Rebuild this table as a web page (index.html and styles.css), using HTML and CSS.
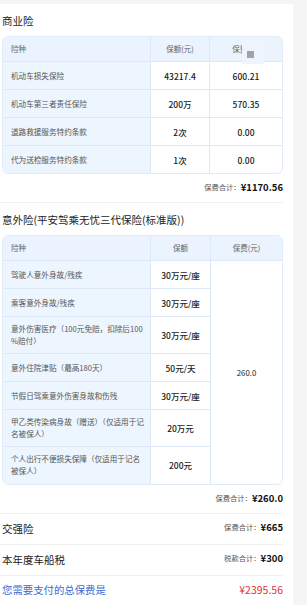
FILE: index.html
```html
<!DOCTYPE html>
<html lang="zh">
<head>
<meta charset="utf-8">
<link rel="stylesheet" href="styles.css">
</head>
<body>
<div class="page">
  <section class="block">
    <h2 class="sec-title">商业险</h2>
    <div class="tbl tbl1">
      <div class="th th-left">险种</div>
      <div class="th">保额(元)</div>
      <div class="th th-last">保费(元)</div>

      <div class="td td-name">机动车损失保险</div>
      <div class="td td-val">43217.4</div>
      <div class="td td-val td-last">600.21</div>

      <div class="td td-name">机动车第三者责任保险</div>
      <div class="td td-val">200万</div>
      <div class="td td-val td-last">570.35</div>

      <div class="td td-name">道路救援服务特约条款</div>
      <div class="td td-val">2次</div>
      <div class="td td-val td-last">0.00</div>

      <div class="td td-name row-end">代为送检服务特约条款</div>
      <div class="td td-val row-end">1次</div>
      <div class="td td-val td-last row-end">0.00</div>

      <div class="img-ph"><span class="img-ph-box"></span></div>
    </div>
    <div class="total"><span class="total-label">保费合计：</span><span class="total-val">¥1170.56</span></div>
  </section>

  <section class="block">
    <h2 class="sec-title">意外险(平安驾乘无忧三代保险(标准版))</h2>
    <div class="tbl tbl2">
      <div class="th th-left">险种</div>
      <div class="th">保额</div>
      <div class="th th-last">保费(元)</div>

      <div class="td td-name">驾驶人意外身故/残疾</div>
      <div class="td td-val">30万元/座</div>
      <div class="td td-span">260.0</div>

      <div class="td td-name">乘客意外身故/残疾</div>
      <div class="td td-val">30万元/座</div>

      <div class="td td-name">意外伤害医疗（100元免赔，扣除后100%赔付）</div>
      <div class="td td-val">30万元/座</div>

      <div class="td td-name">意外住院津贴（最高180天）</div>
      <div class="td td-val">50元/天</div>

      <div class="td td-name">节假日驾乘意外伤害身故和伤残</div>
      <div class="td td-val">30万元/座</div>

      <div class="td td-name">甲乙类传染病身故（赠送）（仅适用于记名被保人）</div>
      <div class="td td-val">20万元</div>

      <div class="td td-name row-end">个人出行不便损失保障（仅适用于记名被保人）</div>
      <div class="td td-val row-end">200元</div>
    </div>
    <div class="total"><span class="total-label">保费合计：</span><span class="total-val">¥260.0</span></div>
  </section>

  <div class="line-row">
    <span class="line-title">交强险</span>
    <span class="line-right"><span class="total-label">保费合计：</span><span class="total-val">¥665</span></span>
  </div>
  <div class="line-row">
    <span class="line-title">本年度车船税</span>
    <span class="line-right"><span class="total-label">税款合计：</span><span class="total-val">¥300</span></span>
  </div>
  <div class="line-row line-final">
    <span class="final-label">您需要支付的总保费是</span>
    <span class="final-val">¥2395.56</span>
  </div>
</div>
</body>
</html>
```

FILE: styles.css
```css
* { box-sizing: border-box; }

html, body {
  margin: 0;
  padding: 0;
  background: #f5f5f5;
  font-family: "Noto Sans CJK SC", "Noto Sans", sans-serif;
  color: #222;
}

.page {
  width: 293px;
  height: 601px;
  margin-top: 4px;
  background: #fff;
  overflow: hidden;
}

.block {
  width: 283px;
  padding: 7px 0 6px 2px;
  border-bottom: 1px solid #f0f0f0;
}

.sec-title {
  margin: 0;
  height: 20px;
  display: flex;
  align-items: center;
  font-size: 10.5px;
  font-weight: 400;
  line-height: 1;
  color: #222;
}

.tbl {
  position: relative;
  margin-top: 5px;
  width: 281px;
  display: grid;
  border: 1px solid #e1ecf9;
  border-radius: 6px;
  overflow: hidden;
  background: #fff;
}

.tbl1 { grid-template-columns: 148px 59px 1fr; }
.tbl2 { grid-template-columns: 148px 60px 1fr; }

.th {
  height: 25px;
  background: #eaf3fe;
  border-right: 1px solid #dde9f8;
  border-bottom: 1px solid #dde9f8;
  font-size: 7.5px;
  line-height: 1;
  color: #666;
  display: flex;
  align-items: center;
  justify-content: center;
}
.th-left { justify-content: flex-start; padding-left: 8px; }
.th-last { border-right: none; }

.td {
  min-height: 28px;
  padding: 6px 8px;
  line-height: 12px;
  border-right: 1px solid #dde9f8;
  border-bottom: 1px solid #dde9f8;
  display: flex;
  align-items: center;
}
.td-name {
  background: #edf5fe;
  font-size: 7.6px;
  color: #555;
  padding-right: 4px;
  word-break: break-all;
  line-break: anywhere;
}
.td-val {
  justify-content: center;
  font-size: 8.5px;
  font-weight: 500;
  color: #1a1a1a;
  padding: 6px 2px;
}
.td-last { border-right: none; }
.row-end { border-bottom: none; }
.tbl1 .row-end { min-height: 27px; }
.tbl2 .row-end { padding-bottom: 7px; }

.td-span {
  grid-column: 3;
  grid-row: 2 / span 7;
  border-right: none;
  border-bottom: none;
  justify-content: center;
  font-size: 7.8px;
  color: #222;
}

.img-ph {
  position: absolute;
  left: 239px;
  top: -1px;
  width: 22px;
  height: 28px;
  background: #eef4fc;
}
.img-ph-box {
  position: absolute;
  left: 5px;
  top: 15px;
  width: 7px;
  height: 7px;
  background: #9ea3aa;
}

.total {
  margin-top: 6px;
  height: 16px;
  display: flex;
  justify-content: flex-end;
  align-items: center;
  line-height: 1;
}
.total-label {
  font-size: 7.3px;
  color: #555;
}
.total-val {
  font-size: 9.5px;
  font-weight: 700;
  color: #111;
}

.line-row {
  width: 283px;
  height: 31px;
  padding-left: 2px;
  border-bottom: 1px solid #f0f0f0;
  display: flex;
  align-items: center;
  justify-content: space-between;
  line-height: 1;
}
.line-title {
  font-size: 10.5px;
  color: #222;
}
.line-right {
  display: flex;
  align-items: center;
  margin-top: -3px;
}
.line-final {
  height: 29px;
  border-bottom: none;
}
.final-label {
  font-size: 10.4px;
  color: #3a6bd1;
}
.final-val {
  font-size: 10.5px;
  color: #e3303b;
}
```
